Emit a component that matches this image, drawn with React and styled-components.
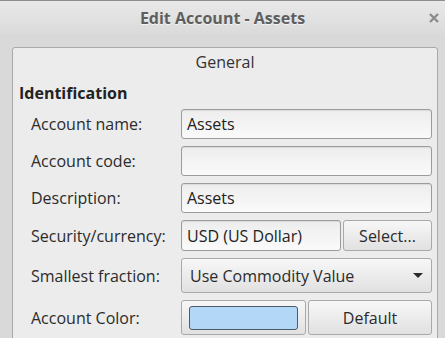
import React from "react";
import styled, { createGlobalStyle } from "styled-components";

const Global = createGlobalStyle`
  html, body {
    margin: 0;
    padding: 0;
    background: #d9d9d9;
    font-family: "Open Sans", "Noto Sans", sans-serif;
    overflow: hidden;
  }
`;

const Window = styled.div`
  width: 445px;
  height: 338px;
  border-top: 1px solid #8e8e8e;
  box-sizing: border-box;
  background: #d9d9d9;
  overflow: hidden;
`;

const TitleBar = styled.div`
  height: 34px;
  display: flex;
  align-items: center;
  justify-content: center;
  position: relative;
  background: linear-gradient(#e9e9e9, #dadada);
`;

const Title = styled.div`
  font-size: 16px;
  font-weight: bold;
  color: #5e5e5e;
  text-shadow: 0 1px 0 #f4f4f4;
`;

const Close = styled.svg`
  position: absolute;
  right: 6px;
  top: 12px;
`;

const Body = styled.div`
  padding: 12px 7px 0 12px;
`;

const Frame = styled.div`
  border: 1px solid #a9a9a9;
  border-radius: 3px;
  background: #ececec;
  height: 320px;
`;

const FrameLabel = styled.div`
  text-align: center;
  font-size: 16px;
  color: #333;
  height: 29px;
  line-height: 28px;
`;

const Section = styled.div`
  font-size: 16px;
  font-weight: bold;
  color: #222;
  padding-left: 6px;
  height: 32px;
  line-height: 32px;
`;

const Grid = styled.div`
  display: grid;
  grid-template-columns: 150px 251px;
  row-gap: 7px;
  padding-left: 18px;
  align-items: center;
`;

const Label = styled.div`
  font-size: 16px;
  color: #2b2b2b;
`;

const Input = styled.div`
  box-sizing: border-box;
  height: ${p => p.h || 30}px;
  border: 1px solid #9c9c9c;
  border-radius: 3px;
  background: linear-gradient(#ededed, #fafafa);
  box-shadow: inset 0 1px 1px rgba(0,0,0,0.08);
  font-size: 16px;
  color: #222;
  padding-left: 5px;
  display: flex;
  align-items: center;
`;

const Pair = styled.div`
  display: grid;
  grid-template-columns: ${p => p.cols};
  gap: 2px;
`;

const Button = styled.div`
  box-sizing: border-box;
  height: ${p => p.h || 30}px;
  border: 1px solid #a9a9a9;
  border-radius: 3px;
  background: linear-gradient(#f7f7f7, #e1e1e1);
  font-size: 16px;
  color: #2b2b2b;
  display: flex;
  align-items: center;
  justify-content: ${p => p.justify || "center"};
  padding: 0 ${p => p.pad || 0}px;
`;

const Arrow = styled.span`
  width: 0;
  height: 0;
  border-left: 5px solid transparent;
  border-right: 5px solid transparent;
  border-top: 5px solid #2b2b2b;
`;

const Swatch = styled.div`
  width: 109px;
  height: 24px;
  box-sizing: border-box;
  border: 1px solid #4e5a66;
  border-radius: 3px;
  background: #b3d7f7;
`;

export default function App() {
  return (
    <Window>
      <Global />
      <TitleBar>
        <Title>Edit Account - Assets</Title>
        <Close width="10" height="10" viewBox="0 0 10 10">
          <path d="M1 1 L9 9 M9 1 L1 9" stroke="#8c8c8c" strokeWidth="2.4" />
        </Close>
      </TitleBar>
      <Body>
        <Frame>
          <FrameLabel>General</FrameLabel>
          <Section>Identification</Section>
          <Grid>
            <Label>Account name:</Label>
            <Input>Assets</Input>
            <Label>Account code:</Label>
            <Input />
            <Label>Description:</Label>
            <Input>Assets</Input>
            <Label>Security/currency:</Label>
            <Pair cols="160px 89px">
              <Input h={31}>USD (US Dollar)</Input>
              <Button h={31}>Select...</Button>
            </Pair>
            <Label>Smallest fraction:</Label>
            <Button h={35} justify="space-between" pad={8}>
              <span>Use Commodity Value</span>
              <Arrow />
            </Button>
            <Label>Account Color:</Label>
            <Pair cols="125px 124px">
              <Button h={35}><Swatch /></Button>
              <Button h={35}>Default</Button>
            </Pair>
          </Grid>
        </Frame>
      </Body>
    </Window>
  );
}
